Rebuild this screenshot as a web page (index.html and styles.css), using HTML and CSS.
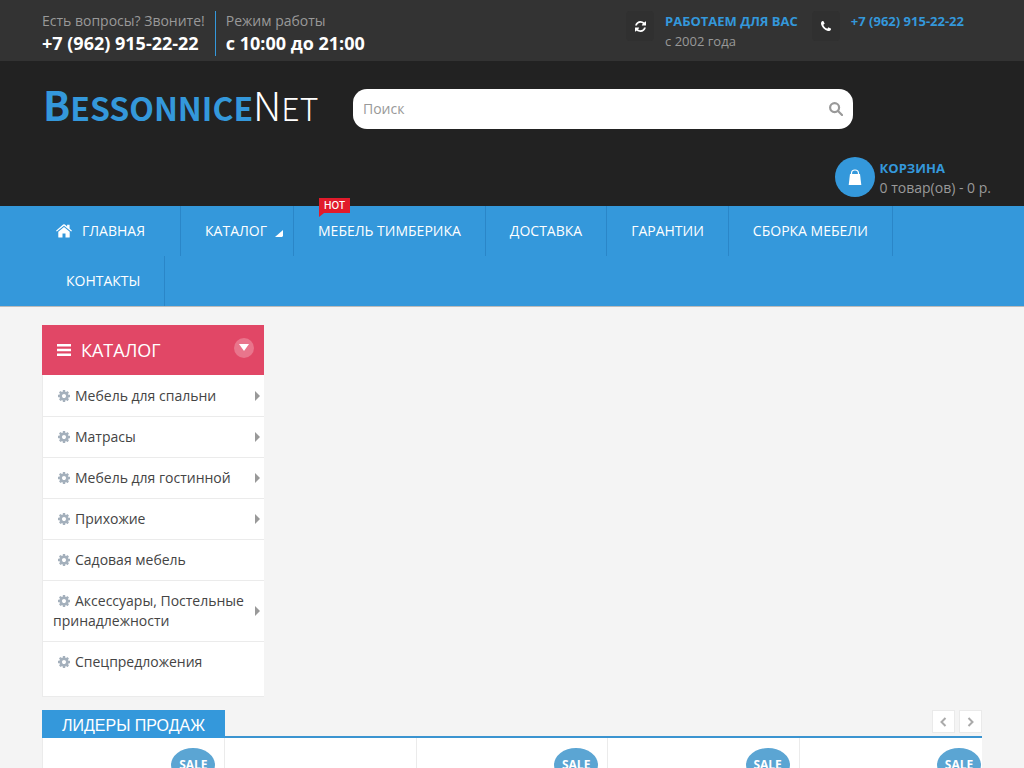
FILE: index.html
```html
<!DOCTYPE html>
<html lang="ru">
<head>
<meta charset="utf-8">
<meta name="viewport" content="width=device-width, initial-scale=1">
<title>BessonniceNet</title>
<link rel="stylesheet" href="styles.css">
</head>
<body>
<svg class="sprite" aria-hidden="true">
  <symbol id="gear" viewBox="0 0 1536 1536"><path d="M1024 768q0-106-75-181t-181-75-181 75-75 181 75 181 181 75 181-75 75-181zm512-109v222q0 12-8 23t-20 13l-185 28q-19 54-39 91 35 50 107 138 10 12 10 25t-9 23q-27 37-99 108t-94 71q-12 0-26-9l-138-108q-44 23-91 38-16 136-29 186-7 28-36 28H657q-14 0-24.500-8.500T621 1506l-28-184q-49-16-90-37l-141 107q-10 9-25 9-14 0-25-11-126-114-165-168-7-10-7-23 0-12 8-23 15-21 51-66.500t54-70.500q-27-50-41-99L29 913q-13-2-21-12.500T0 877V655q0-12 8-23t19-13l186-28q14-46 39-92-40-57-107-138-10-12-10-24 0-10 9-23 26-36 98.500-107.500T337 135q13 0 26 10l138 107q44-23 91-38 16-136 29-186 7-28 36-28h222q14 0 24.500 8.500T915 30l28 184q49 16 90 37l142-107q9-9 24-9 13 0 25 10 129 119 165 170 7 8 7 22 0 12-8 23-15 21-51 66.500t-54 70.500q26 50 41 98l183 28q13 2 21 12.500t8 23.500z"/></symbol>
</svg>
<div class="topbar">
  <div class="container topbar-inner">
    <div class="facts">
      <div class="fact"><span>Есть вопросы? Звоните!</span><strong>+7 (962) 915-22-22</strong></div>
      <div class="fact"><span>Режим работы</span><strong>с 10:00 до 21:00</strong></div>
    </div>
    <div class="promos">
      <div class="promo">
        <span class="promo-icon"><svg width="11" height="11" viewBox="0 0 1536 1536"><path d="M1511 928q0 5-1 7-64 268-268 434.500T764 1536q-146 0-282.500-55T238 1324l-129 129q-19 19-45 19t-45-19-19-45V960q0-26 19-45t45-19h448q26 0 45 19t19 45-19 45l-137 137q71 66 161 102t187 36q134 0 250-65t186-179q11-17 53-117 8-23 30-23h192q13 0 22.500 9.500t9.500 22.500zm25-800v448q0 26-19 45t-45 19h-448q-26 0-45-19t-19-45 19-45l138-138Q969 256 768 256q-134 0-250 65T332 500q-11 17-53 117-8 23-30 23H50q-13 0-22.500-9.500T18 608v-7q65-268 270-434.500T768 0q146 0 284 55.500T1297 212l130-129q19-19 45-19t45 19 19 45z"/></svg></span>
        <p><b>РАБОТАЕМ ДЛЯ ВАС</b><span>с 2002 года</span></p>
      </div>
      <div class="promo">
        <span class="promo-icon"><svg width="10" height="10" viewBox="0 0 1408 1408"><path d="M1408 1112q0 27-10 70.500t-21 68.500q-21 50-122 106-94 51-186 51-27 0-53-3.500t-57.500-12.500-47-14.500T856 1357t-49-18q-98-35-175-83-127-79-264-216T152 776q-48-77-83-175-3-9-18-49t-20.500-55.500-14.500-47T3.500 392 0 339q0-92 51-186Q107 52 157 31q25-11 68.500-21T296 0q14 0 21 3 18 6 53 76 11 19 30 54t35 63.500 31 53.500q3 4 17.500 25t21.500 35.500 7 28.500q0 20-28.500 50t-62 55-62 53-28.500 46q0 9 5 22.500t8.500 20.500 14 24 11.500 19q76 137 174 235t235 174q2 1 19 11.500t24 14 20.500 8.500 22.500 5q18 0 46-28.500t53-62 55-62 50-28.500q14 0 28.500 7t35.500 21.500 25 17.500q25 15 53.500 31t63.500 35 54 30q70 35 76 53 3 7 3 21z"/></svg></span>
        <p><b>+7 (962) 915-22-22</b></p>
      </div>
    </div>
  </div>
</div>
<header class="header">
  <div class="container header-inner">
    <a class="logo" href="#"><b>B<small>ESSONNICE</small></b>N<small>ET</small></a>
    <form class="search">
      <input type="text" placeholder="Поиск" aria-label="Поиск">
      <button type="button" aria-label="Найти"><svg width="14" height="14" viewBox="0 0 14 14"><circle cx="5.600" cy="5.600" r="4.500"/><path d="M9 9l4 4"/></svg></button>
    </form>
  </div>
  <a class="cart" href="#">
    <span class="cart-icon"><svg width="14" height="16" viewBox="0 0 14 16"><path class="bag" d="M2 5h10l1.300 11H.700z"/><path class="handle" d="M3.500 6V4.500C3.500 2 4.500 1 7 1s3.500 1 3.500 3.500V6"/></svg></span>
    <span class="cart-text"><b>КОРЗИНА</b><span>0 товар(ов) - 0 р.</span></span>
  </a>
</header>
<nav class="nav">
  <ul class="container menu">
    <li class="home"><a href="#"><svg width="16" height="14" viewBox="0 0 16 14"><path d="M8 3l5.700 4.700V13q0 .6-.6.6H9.500V9.500h-3v4.100H2.900q-.6 0-.6-.6V7.700z"/><path d="M8 .2q.5 0 .9.300l2.200 1.900V.800h2.500V4.500L16 6.700l-.8.900L8 1.700.8 7.600 0 6.700 7.100.500Q7.500.200 8 .200z"/></svg>ГЛАВНАЯ</a></li>
    <li class="has-sub"><a href="#">КАТАЛОГ<svg width="8" height="8" viewBox="0 0 8 8"><path d="M8 0v6L7 7H0z"/></svg></a></li>
    <li><a href="#">МЕБЕЛЬ ТИМБЕРИКА</a><span class="hot">HOT</span></li>
    <li><a href="#">ДОСТАВКА</a></li>
    <li><a href="#">ГАРАНТИИ</a></li>
    <li><a href="#">СБОРКА МЕБЕЛИ</a></li>
    <li><a href="#">КОНТАКТЫ</a></li>
  </ul>
</nav>
<main class="container">
  <aside class="catalog">
    <h2><svg width="14" height="12" viewBox="0 0 14 12"><path d="M0 0h14v2.500H0zM0 4.700h14v2.500H0zM0 9.400h14V12H0z"/></svg>КАТАЛОГ<button type="button" aria-label="Свернуть каталог"><svg width="10" height="7" viewBox="0 0 10 7"><path d="M0 0h10L5 7z"/></svg></button></h2>
    <ul>
      <li class="more"><a href="#"><svg class="gear"><use href="#gear"/></svg>Мебель для спальни</a></li>
      <li class="more"><a href="#"><svg class="gear"><use href="#gear"/></svg>Матрасы</a></li>
      <li class="more"><a href="#"><svg class="gear"><use href="#gear"/></svg>Мебель для гостинной</a></li>
      <li class="more"><a href="#"><svg class="gear"><use href="#gear"/></svg>Прихожие</a></li>
      <li><a href="#"><svg class="gear"><use href="#gear"/></svg>Садовая мебель</a></li>
      <li class="more"><a href="#"><svg class="gear"><use href="#gear"/></svg>Аксессуары, Постельные принадлежности</a></li>
      <li><a href="#"><svg class="gear"><use href="#gear"/></svg>Спецпредложения</a></li>
    </ul>
  </aside>
  <section class="leaders">
    <div class="leaders-head">
      <h2>ЛИДЕРЫ ПРОДАЖ</h2>
      <div class="pager">
        <button type="button" aria-label="Назад"><svg width="7" height="10" viewBox="0 0 7 10"><path d="M5.500 1l-4 4 4 4"/></svg></button>
        <button type="button" aria-label="Вперёд"><svg width="7" height="10" viewBox="0 0 7 10"><path d="M1.500 1l4 4-4 4"/></svg></button>
      </div>
    </div>
    <div class="carousel">
      <div class="track">
        <article class="card"><span class="sale">SALE</span></article>
        <article class="card"></article>
        <article class="card"><span class="sale">SALE</span></article>
        <article class="card"><span class="sale">SALE</span></article>
        <article class="card"><span class="sale">SALE</span></article>
      </div>
    </div>
  </section>
</main>
</body>
</html>
```
FILE: styles.css
```css
* { box-sizing: border-box; }
body {
  margin: 0;
  background: #f4f4f4;
  color: #444;
  font: 14px/20px "Open Sans", "Noto Sans", sans-serif;
}
a { color: inherit; text-decoration: none; }
ul, h2, p { margin: 0; padding: 0; list-style: none; }
button { padding: 0; border: 0; cursor: pointer; }
.sprite { position: absolute; width: 0; height: 0; }
.container { max-width: 940px; margin: 0 auto; }

.topbar { background: #333; color: #999; }
.topbar-inner { display: flex; justify-content: space-between; min-height: 61px; padding-top: 11px; }
.facts { display: flex; height: 45px; }
.fact { display: flex; flex-direction: column; padding-right: 10px; }
.fact + .fact { padding-left: 10px; border-left: 1px solid #3498db; }
.fact strong { color: #fff; font-size: 18px; line-height: 25px; font-weight: 700; }
.promos { display: flex; gap: 14px; padding-right: 18px; }
.promo { display: flex; gap: 11px; }
.promo-icon { display: flex; align-items: center; justify-content: center; width: 28px; height: 30px; border-radius: 4px; background: #303030; }
.promo-icon svg { fill: #fff; }
.promo p { display: flex; flex-direction: column; font-size: 13px; }
.promo b { color: #3498db; }

.header { background: #222; padding: 28px 0 8px; }
.header-inner { display: flex; align-items: flex-start; height: 40px; }
.logo { flex: 0 0 311px; padding-left: 1px; color: #fff; font: 300 40px/30px "Noto Sans CJK SC", "Noto Sans", sans-serif; }
.logo b { color: #3498db; font-weight: 700; }
.logo small { font-size: 32px; }
.search { display: flex; width: 500px; height: 40px; border-radius: 14px; background: #fff; overflow: hidden; }
.search input { flex: 1; min-width: 0; padding: 0 10px; border: 0; background: none; font: inherit; color: #444; }
.search input::placeholder { color: #999; opacity: 1; }
.search button { width: 34px; background: none; }
.search svg { display: block; margin: auto; fill: none; stroke: #999; stroke-width: 2.200; stroke-linecap: round; }
.cart { display: flex; justify-content: flex-end; gap: 5px; padding: 28px 33px 0 0; }
.cart-icon { display: flex; align-items: center; justify-content: center; width: 40px; height: 40px; border-radius: 50%; background: #3498db; }
.bag { fill: #fff; }
.handle { fill: none; stroke: #fff; stroke-width: 1.200; }
.cart-text { display: flex; flex-direction: column; padding-top: 1px; color: #999; }
.cart-text b { font-size: 13px; color: #3498db; }

.nav { height: auto; background: #3498db; border-bottom: 1px solid #bbb; color: #fff; }
.menu { display: flex; flex-wrap: wrap; }
.menu li { position: relative; border-right: 1px solid #2a86c8; }
.menu a { display: flex; align-items: center; height: 50px; padding: 0 24px; }
.menu svg { fill: #fff; }
.menu .home a { gap: 10px; padding: 0 35px 0 14px; }
.menu .has-sub a { gap: 8px; padding-right: 10px; }
.has-sub svg { margin-top: 5px; }
.hot { position: absolute; left: 25px; top: -8px; padding: 0 5px; background: #e11b2b; font: 500 10px/15px Inter, "Open Sans", sans-serif; }
.hot::after { content: ""; position: absolute; left: 0; top: 100%; border-top: 4px solid #e11b2b; border-right: 5px solid transparent; }

.catalog { width: 222px; margin-top: 18px; }
.catalog h2 { display: flex; align-items: center; gap: 10px; height: 50px; padding: 0 10px 0 15px; background: #e14766; color: #fff; font-size: 18px; font-weight: 400; }
.catalog h2 svg { fill: #fff; }
.catalog h2 button { display: flex; align-items: center; justify-content: center; width: 20px; height: 20px; margin: 0 0 5px auto; border-radius: 50%; background: #e9758c; }
.catalog ul { padding-bottom: 14px; border: 1px solid #ebebeb; border-width: 0 0 1px 1px; background: #fff; }
.catalog li { position: relative; padding: 11px 18px 10px 10px; }
.catalog li + li { padding-top: 10px; border-top: 1px solid #ebebeb; }
.more::after { content: ""; position: absolute; right: 4px; top: 50%; margin-top: -5px; border: 5px solid transparent; border-left-color: #999; border-right: 0; }
.gear { width: 12px; height: 12px; margin: 0 5px; vertical-align: -1px; fill: #a4b0bc; }

.leaders { margin-top: 13px; }
.leaders-head { display: flex; align-items: flex-start; justify-content: space-between; border-bottom: 2px solid #3b94d0; }
.leaders h2 { height: 28px; margin-bottom: -2px; padding: 0 20px; background: #3498db; color: #fff; font: 400 16px/31px "Liberation Sans", Arial, sans-serif; }
.pager { display: flex; gap: 4px; }
.pager button { display: flex; align-items: center; justify-content: center; width: 23px; height: 23px; border: 1px solid #eaeaea; background: #fff; }
.pager svg { fill: none; stroke: #aaa; stroke-width: 2; }
.carousel { overflow: hidden; border-left: 1px solid #ebebeb; background: #fff; }
.track { display: grid; grid-template-columns: repeat(5, 1fr); margin: 0 -9px; }
.card { position: relative; min-height: 280px; border-right: 1px solid #ebebeb; }
.sale { position: absolute; right: 9px; top: 10px; width: 44px; border-radius: 50%; background: #5ba5d3; color: #fff; font-size: 12px; line-height: 34px; font-weight: 700; text-align: center; }
```
